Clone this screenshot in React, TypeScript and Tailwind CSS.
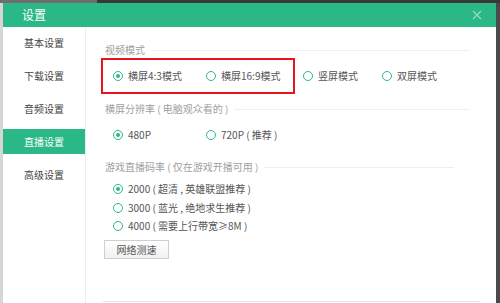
import { Fragment } from "react"

const font = { fontFamily: '"Noto Sans CJK SC", "Noto Sans", sans-serif' }

const navItems = ["基本设置", "下载设置", "音频设置", "直播设置", "高级设置"]

function Radio({ checked }: { checked?: boolean }) {
  return (
    <span className="w-[10px] h-[10px] rounded-full border-[1.5px] border-[#2db889] flex items-center justify-center shrink-0">
      {checked && <span className="w-[4px] h-[4px] rounded-full bg-[#2db889]" />}
    </span>
  )
}

function Option({ label, checked, w }: { label: string; checked?: boolean; w?: string }) {
  return (
    <div className={`flex items-center gap-[5px] ${w ?? ""}`}>
      <Radio checked={checked} />
      <span className="text-[10px] text-[#555] leading-none whitespace-pre">{label}</span>
    </div>
  )
}

function SectionLabel({ text, className }: { text: string; className?: string }) {
  return (
    <div className={`flex items-center h-[14px] ${className ?? ""}`}>
      <span className="text-[10px] text-[#a0a0a0] leading-none whitespace-pre">{text}</span>
      <div className="flex-1 h-px bg-[#efefef] ml-[6px]" />
    </div>
  )
}

export default function App() {
  return (
    <div className="w-[500px] h-[303px] flex flex-col bg-white overflow-hidden" style={font}>
      <div className="h-[3px] flex shrink-0">
        <div className="w-[97px] bg-[#6e6e6e]" />
        <div className="flex-1 bg-[#383838]" />
      </div>
      <div className="flex-1 flex min-h-0">
        <div className="w-[3px] bg-[#d6d6d6]" />
        <div className="flex-1 flex flex-col min-w-0">
          {/* title bar */}
          <div className="h-[24px] bg-[#2bb887] flex items-center justify-between pl-[19px] pr-[14px] shrink-0">
            <span className="text-[12px] text-white leading-none">设置</span>
            <svg width="10" height="10" viewBox="0 0 10 10" className="opacity-50">
              <path d="M1 1 L9 9 M9 1 L1 9" stroke="white" strokeWidth="1.2" />
            </svg>
          </div>
          <div className="flex-1 flex min-h-0">
            {/* sidebar */}
            <div className="w-[83px] border-r border-[#ececec] flex flex-col pt-[3px]">
              {navItems.map((item) => (
                <Fragment key={item}>
                  <div
                    className={`h-[25px] mt-[8px] first:mt-0 flex items-center justify-center text-[10px] leading-none ${
                      item === "直播设置" ? "bg-[#2bb887] text-white" : "text-[#444]"
                    }`}
                  >
                    {item}
                  </div>
                </Fragment>
              ))}
            </div>
            {/* content */}
            <div className="flex-1 flex flex-col pt-[16px]">
              <SectionLabel text="视频模式" className="pl-[19px] pr-[27px]" />
              <div className="relative h-[36px] mt-[1px] flex items-center pl-[27px]">
                <Option label="横屏4:3模式" checked w="w-[93px]" />
                <Option label="横屏16:9模式" w="w-[97px]" />
                <Option label="竖屏模式" w="w-[79px]" />
                <Option label="双屏模式" />
                <div className="absolute left-[15px] top-0 w-[194px] h-[36px] border-2 border-[#e8141b]" />
              </div>
              <SectionLabel text="横屏分辨率 ( 电脑观众看的 )" className="pl-[19px] pr-[27px] mt-[8px]" />
              <div className="h-[18px] mt-[10px] flex items-center pl-[27px]">
                <Option label="480P" checked w="w-[93px]" />
                <Option label="720P ( 推荐 )" />
              </div>
              <SectionLabel text="游戏直播码率 ( 仅在游戏开播可用 )" className="pl-[19px] pr-[42px] mt-[16px]" />
              <div className="flex flex-col mt-[6px] pl-[27px]">
                <div className="h-[18.5px] flex items-center">
                  <Option label="2000 ( 超清 , 英雄联盟推荐 )" checked />
                </div>
                <div className="h-[18.5px] flex items-center">
                  <Option label="3000 ( 蓝光 , 绝地求生推荐 )" />
                </div>
                <div className="h-[18.5px] flex items-center">
                  <Option label="4000 ( 需要上行带宽≥8M )" />
                </div>
              </div>
              <div className="ml-[18px] mt-[4.5px] w-[65px] h-[19px] border border-[#cfcfcf] bg-gradient-to-b from-white to-[#f1f1f1] flex items-center justify-center text-[10px] text-[#555] leading-none">
                网络测速
              </div>
              <div className="mt-auto mb-[1px] ml-[17px] mr-[16px] h-px bg-[#e6e6e6]" />
            </div>
          </div>
        </div>
        <div className="w-[4px] bg-[#4a4a4a]" />
      </div>
    </div>
  )
}
